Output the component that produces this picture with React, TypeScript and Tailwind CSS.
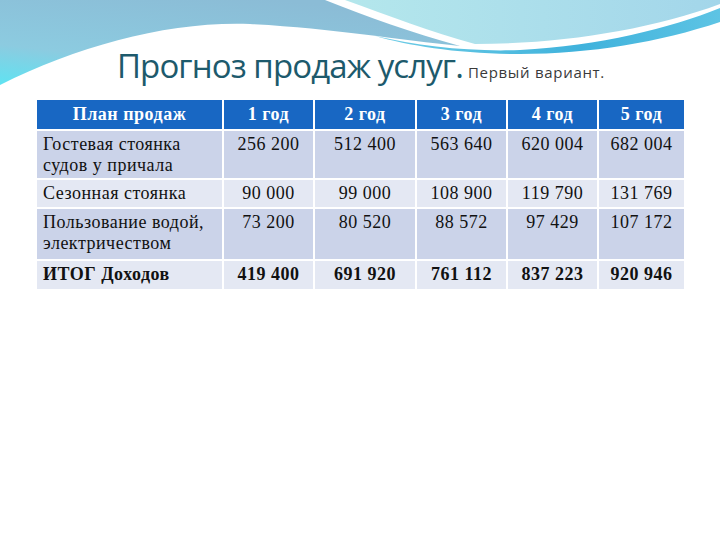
import React from "react";

const rows = [
  { label: ["Гостевая стоянка", "судов у причала"], vals: ["256 200", "512 400", "563 640", "620 004", "682 004"], h: "h-[47px]", bg: "bg-[#cbd3e9]", bold: false },
  { label: ["Сезонная стоянка"], vals: ["90 000", "99 000", "108 900", "119 790", "131 769"], h: "h-[27px]", bg: "bg-[#e4e8f3]", bold: false },
  { label: ["Пользование водой,", "электричеством"], vals: ["73 200", "80 520", "88 572", "97 429", "107 172"], h: "h-[50px]", bg: "bg-[#cbd3e9]", bold: false },
  { label: ["ИТОГ Доходов"], vals: ["419 400", "691 920", "761 112", "837 223", "920 946"], h: "h-[28px]", bg: "bg-[#e4e8f3]", bold: true },
];

const headers = ["План продаж", "1 год", "2 год", "3 год", "4 год", "5 год"];

export default function App() {
  return (
    <div className="relative w-[720px] h-[540px] bg-white overflow-hidden">
      <svg className="absolute inset-0" width="720" height="120" viewBox="0 0 720 120">
        <defs>
          <linearGradient id="gl" x1="0" y1="1" x2="0.6" y2="0">
            <stop offset="0" stopColor="#5fe3f2" />
            <stop offset="0.35" stopColor="#8ccbe0" />
            <stop offset="1" stopColor="#8bbcd6" />
          </linearGradient>
          <linearGradient id="gr" x1="0" y1="0" x2="1" y2="0">
            <stop offset="0" stopColor="#b4e7ec" />
            <stop offset="1" stopColor="#a3d6ea" />
          </linearGradient>
          <linearGradient id="gb" x1="0" y1="0" x2="1" y2="0">
            <stop offset="0" stopColor="#6fcde6" />
            <stop offset="0.6" stopColor="#3fb2dc" />
            <stop offset="1" stopColor="#5ec4e4" />
          </linearGradient>
        </defs>
        <path d="M0,0 L325,0 C370,18 410,32 460,46 C400,40 330,28 250,24 C170,21 80,45 0,85 Z" fill="url(#gl)" />
        <path d="M345,0 L720,0 L720,4 C650,30 560,44 475,44 C430,32 390,16 345,0 Z" fill="url(#gr)" />
        <path d="M375,36 C420,46 470,52 520,50 C600,46 670,28 720,8 L720,22 C660,42 590,54 520,54 C460,54 410,46 375,36 Z" fill="url(#gb)" />
      </svg>

      <div className="relative flex flex-col">
        <div className="flex items-baseline pl-[117px] pt-[46px] h-[98px]">
          <span className="text-[#1d5a6c] text-[33px] leading-[40px] tracking-[-0.9px]" style={{ fontFamily: "'Open Sans', sans-serif" }}>
            Прогноз продаж услуг.
          </span>
          <span className="ml-[5px] text-[#3a3a3a] text-[15px] tracking-[0.7px]" style={{ fontFamily: "'Open Sans', sans-serif" }}>
            Первый вариант.
          </span>
        </div>

        <div
          className="ml-[37px] mt-[2px] grid grid-cols-[185px_89px_100px_89px_89px_85px] gap-x-[2px] gap-y-[2px] w-[647px] text-[18px] tracking-[0.5px] text-[#111]"
          style={{ fontFamily: "'Liberation Serif', 'DejaVu Serif', serif" }}
        >
          {headers.map((h) => (
            <div key={h} className="h-[29px] bg-[#1867c3] text-white font-bold flex items-center justify-center">
              {h}
            </div>
          ))}
          {rows.map((r) => (
            <React.Fragment key={r.label[0]}>
              <div className={`${r.h} ${r.bg} pl-[6px] pt-[3px] leading-[21px] whitespace-nowrap ${r.bold ? "font-bold" : ""}`}>
                {r.label.map((l) => (
                  <div key={l}>{l}</div>
                ))}
              </div>
              {r.vals.map((v, i) => (
                <div key={i} className={`${r.h} ${r.bg} pt-[3px] leading-[21px] text-center whitespace-nowrap ${r.bold ? "font-bold" : ""}`}>
                  {v}
                </div>
              ))}
            </React.Fragment>
          ))}
        </div>
      </div>
    </div>
  );
}
